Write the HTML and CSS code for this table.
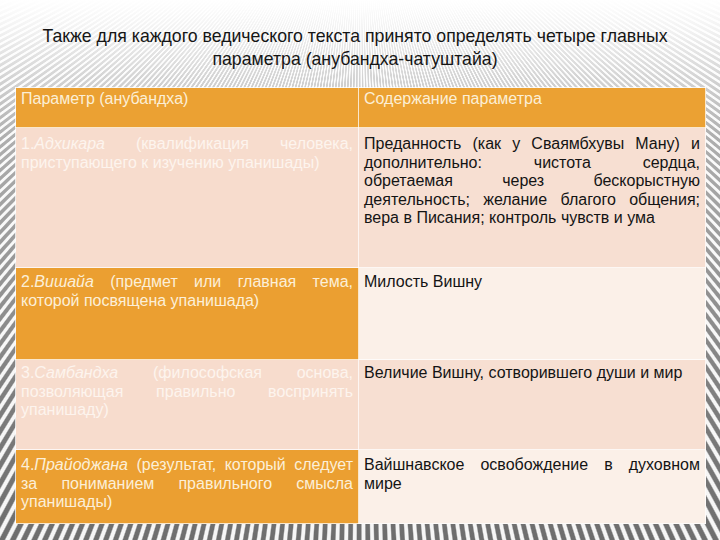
FILE: index.html
```html
<!DOCTYPE html>
<html lang="ru">
<head>
<meta charset="utf-8">
<title>Анубандха-чатуштайа</title>
<link rel="stylesheet" href="styles.css">
</head>
<body>
<div class="slide">
  <h1 class="title">Также для каждого ведического текста принято определять четыре главных<br>параметра (анубандха-чатуштайа)</h1>
  <table class="params">
    <colgroup><col class="c-left"><col class="c-right"></colgroup>
    <thead>
      <tr class="r-head">
        <th>Параметр (анубандха)</th>
        <th>Содержание параметра</th>
      </tr>
    </thead>
    <tbody>
      <tr class="r1 odd">
        <td class="name"><span class="jl">1.<i>Адхикара</i> (квалификация человека,</span>приступающего к изучению упанишады)</td>
        <td class="val"><span class="jl">Преданность (как у Сваямбхувы Ману) и</span><span class="jl">дополнительно: чистота сердца,</span><span class="jl">обретаемая через бескорыстную</span><span class="jl">деятельность; желание благого общения;</span>вера в Писания; контроль чувств и ума</td>
      </tr>
      <tr class="r2 even">
        <td class="name"><span class="jl">2.<i>Вишайа</i> (предмет или главная тема,</span>которой посвящена упанишада)</td>
        <td class="val">Милость Вишну</td>
      </tr>
      <tr class="r3 odd">
        <td class="name"><span class="jl">3.<i>Самбандха</i> (философская основа,</span><span class="jl">позволяющая правильно воспринять</span>упанишаду)</td>
        <td class="val">Величие Вишну, сотворившего души и мир</td>
      </tr>
      <tr class="r4 even">
        <td class="name"><span class="jl">4.<i>Прайоджана</i> (результат, который следует</span><span class="jl">за пониманием правильного смысла</span>упанишады)</td>
        <td class="val"><span class="jl">Вайшнавское освобождение в духовном</span>мире</td>
      </tr>
    </tbody>
  </table>
</div>
</body>
</html>
```

FILE: styles.css
```css
html, body {
  margin: 0;
  padding: 0;
}
body {
  width: 720px;
  height: 540px;
  overflow: hidden;
  font-family: "Liberation Sans", Arial, sans-serif;
}
.slide {
  width: 720px;
  height: 540px;
  box-sizing: border-box;
  padding-top: 25px;
  background-color: #ffffff;
  background-image:
    linear-gradient(to bottom, #ffffff 0%, rgba(255,255,255,0.9) 6%, rgba(255,255,255,0.45) 25%, rgba(255,255,255,0.1) 75%, rgba(255,255,255,0) 100%),
    repeating-conic-gradient(from 0deg at 360px -150px, #6e6e6e 0turn 0.0006turn, #f6f6f6 0.0009turn 0.0015turn, #6e6e6e 0.0018turn 0.002turn);
}
.title {
  margin: 0;
  padding-right: 10px;
  font-weight: normal;
  font-size: 17.7px;
  line-height: 23px;
  color: #151515;
  text-align: center;
}
.params {
  margin: 16px 0 0 15px;
  width: 690px;
  border-collapse: collapse;
  table-layout: fixed;
  font-size: 16px;
  line-height: 18.5px;
}
.c-left { width: 343px; }
.c-right { width: 347px; }
.params th, .params td {
  border: 1px solid rgba(255,255,255,0.75);
  vertical-align: top;
  padding: 2px 5px 0 5px;
  text-align: justify;
  font-weight: normal;
}
.params th {
  background: #eba133;
  color: #fcefd6;
  text-align: left;
}
.r-head { height: 40px; }
.r1 { height: 140px; }
.r2 { height: 92px; }
.r3 { height: 90px; }
.r4 { height: 74px; }
.r1 td { padding-top: 7px; }
.r2 td { padding-top: 5px; }
.r3 td { padding-top: 4px; }
.r4 td { padding-top: 6px; }
.odd .name { background: #f7dccd; color: #fdf4ee; }
.even .name { background: #eb9f31; color: #fcefd8; }
.odd .val { background: #f7dfd2; color: #141414; }
.even .val { background: #fbf0e8; color: #141414; }
.jl {
  display: block;
  text-align: justify;
  text-align-last: justify;
}
```
